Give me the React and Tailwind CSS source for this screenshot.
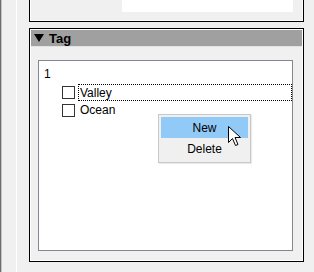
export default function App() {
	return (
		<div className="relative w-[314px] h-[272px] overflow-hidden bg-[#f0f0f0] flex text-[12px] text-black font-['Liberation_Sans','Noto_Sans',sans-serif]">
			<div className="w-px bg-[#6e6e6e]"></div>
			<div className="w-px bg-[#c4c4c4]"></div>
			<div className="w-[14px]"></div>
			<div className="w-px bg-white"></div>
			<div className="w-[12px]"></div>
			<div className="w-[275px] flex flex-col">
				{/* panel above, cut off */}
				<div className="h-[22px] border-x border-b border-black">
					<div className="h-full border-x border-b border-white flex">
						<div className="ml-[91px] w-[171px] h-[12px] bg-white"></div>
					</div>
				</div>
				<div className="h-[6px]"></div>
				{/* Tag panel */}
				<div className="h-[234px] border border-black">
					<div className="h-full border border-white flex flex-col">
						<div className="h-[16px] bg-[#a0a0a0] flex items-center pl-[3px] gap-[5px] font-bold text-[13px]">
							<svg width="10" height="8" viewBox="0 0 10 8">
								<path d="M0 0 L10 0 L5 8 Z" fill="black" />
							</svg>
							<span className="leading-none">Tag</span>
						</div>
						<div className="h-px bg-[#e3e3e3]"></div>
						<div className="mt-[13px] ml-[7px] w-[255px] h-[191px] bg-white border border-[#828790] flex flex-col">
							<div className="pl-[5px] pt-[6px] h-[23px] leading-[14px]">1</div>
							<div className="flex items-center h-[17px]">
								<div className="ml-[23px] w-[13px] h-[13px] border border-[#333] bg-white"></div>
								<div className="ml-[3px] flex-1 h-[17px] border border-dotted border-black flex items-center pl-px leading-none">Valley</div>
							</div>
							<div className="flex items-center h-[16px] mt-[1px]">
								<div className="ml-[23px] w-[13px] h-[13px] border border-[#333] bg-white"></div>
								<div className="ml-[5px] leading-none">Ocean</div>
							</div>
						</div>
					</div>
				</div>
			</div>

			{/* context menu */}
			<div className="absolute left-[158px] top-[114px] w-[93px] h-[49px] bg-[#f0f0f0] border border-[#c8c8c8] p-[2px] flex flex-col shadow-[1px_1px_1px_rgba(0,0,0,0.08)]">
				<div className="h-[21px] bg-[#91c9f7] flex items-center justify-center leading-none">New</div>
				<div className="h-[21px] flex items-center justify-center leading-none">Delete</div>
			</div>

			{/* mouse pointer */}
			<svg className="absolute left-[228px] top-[126px]" width="14" height="22" viewBox="0 0 14 22">
				<path d="M0.5 0.5 L0.5 16.5 L4.5 12.5 L7.5 19.5 L10 18.5 L7 11.5 L12.5 11.5 Z" fill="white" stroke="black" strokeWidth="1" strokeLinejoin="miter" />
			</svg>
		</div>
	)
}
